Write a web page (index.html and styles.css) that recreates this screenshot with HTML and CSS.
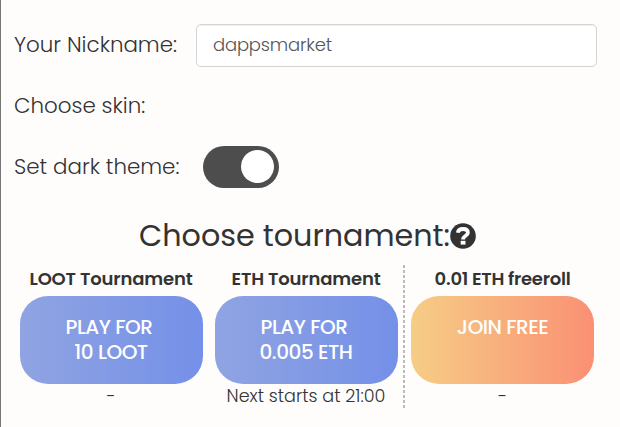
FILE: index.html
```html
<!DOCTYPE html>
<html lang="en">
<head>
    <meta charset="UTF-8">
    <meta name="viewport" content="width=device-width, initial-scale=1.0">
    <title>Choose tournament</title>
    <link rel="stylesheet" href="styles.css">
</head>
<body>
    <div class="panel">
        <div class="form-row">
            <label class="form-label label-nickname" for="nickname">Your Nickname:</label>
            <input class="nickname-input" id="nickname" type="text" value="dappsmarket">
        </div>
        <div class="form-row">
            <span class="form-label">Choose skin:</span>
        </div>
        <div class="form-row">
            <span class="form-label label-theme">Set dark theme:</span>
            <label class="switch">
                <input type="checkbox" checked>
                <span class="slider"></span>
            </label>
        </div>

        <h2 class="title">
            <span>Choose tournament:</span>
            <svg class="help-icon" viewBox="0 0 26 26">
                <circle cx="13" cy="13" r="12.8" fill="#333"/>
                <path d="M7.8 9.8C8.3 6.9 10.2 6 13.1 6C16 6 17.9 7.4 17.9 9.8C17.9 13 13.1 12.6 13.1 16.4" fill="none" stroke="#fff" stroke-width="3.8"/>
                <rect x="10.7" y="17.8" width="4.8" height="3.8" fill="#fff"/>
            </svg>
        </h2>

        <div class="tournaments">
            <div class="tournament">
                <div class="name">LOOT Tournament</div>
                <button class="play-btn">PLAY FOR<br><span class="price">10 LOOT</span></button>
                <div class="next">-</div>
            </div>
            <div class="tournament">
                <div class="name">ETH Tournament</div>
                <button class="play-btn">PLAY FOR<br><span class="price">0.005 ETH</span></button>
                <div class="next">Next starts at 21:00</div>
            </div>
            <div class="tournament freeroll">
                <div class="name name-free">0.01 ETH freeroll</div>
                <button class="play-btn join-btn">JOIN FREE</button>
                <div class="next">-</div>
            </div>
        </div>
    </div>
</body>
</html>
```

FILE: styles.css
```css
* {
    box-sizing: border-box;
}
body {
    margin: 0;
    background: #fefdfc;
    color: #333;
    font-family: Poppins, Inter, "Liberation Sans", sans-serif;
}
.panel {
    height: 427px;
    padding: 14px 23px 0 13px;
    border-left: 1px solid #777;
    overflow: hidden;
}
.form-row {
    display: flex;
    align-items: center;
    height: 61px;
}
.form-label {
    font-size: 21.4px;
    font-weight: 300;
    white-space: nowrap;
}
.label-nickname {
    width: 182px;
}
.label-theme {
    width: 189px;
}
.nickname-input {
    width: 401px;
    height: 43px;
    margin-top: 1px;
    padding: 0 16px 2px;
    border: 1px solid #d4d4d4;
    border-radius: 5px;
    background: #fff;
    box-shadow: inset 0 1px 1px rgba(0,0,0,0.06);
    color: #555;
    font-family: inherit;
    font-size: 18px;
    font-weight: 300;
    letter-spacing: -0.2px;
}
.switch {
    width: 76px;
    height: 42px;
}
.switch input {
    display: none;
}
.slider {
    display: flex;
    align-items: center;
    justify-content: flex-end;
    height: 100%;
    padding-right: 5px;
    border-radius: 21px;
    background: #4d4d4d;
}
.slider::before {
    content: "";
    width: 33px;
    height: 33px;
    border-radius: 50%;
    background: #fff;
}
.title {
    display: flex;
    align-items: center;
    height: 48px;
    margin: 15px 0 0 125px;
    font-size: 30.2px;
    font-weight: 400;
    white-space: nowrap;
}
.help-icon {
    width: 26px;
    height: 26px;
}
.tournaments {
    display: flex;
    margin-top: 5px;
}
.tournament {
    width: 195px;
    height: 145px;
    padding: 0 7px 0 6px;
    text-align: center;
    white-space: nowrap;
}
.freeroll {
    width: 198px;
    margin-left: -1px;
    padding-left: 8px;
    background: repeating-linear-gradient(#bbb 0 3px, transparent 3px 5px) 0 0 / 2px 100% no-repeat;
}
.name {
    height: 31px;
    font-size: 18px;
    font-weight: 600;
    line-height: 28px;
    letter-spacing: -0.15px;
}
.name-free {
    letter-spacing: -0.27px;
}
.play-btn {
    display: block;
    width: 183px;
    height: 88px;
    padding: 19px 5px 19px 0;
    border: none;
    border-radius: 28px;
    background: linear-gradient(90deg, #90a4e2, #7490e8);
    color: #fff;
    font-family: inherit;
    font-size: 20px;
    font-weight: 500;
    line-height: 25px;
    letter-spacing: -0.45px;
}
.price {
    padding-left: 4px;
}
.join-btn {
    padding: 19px 0 44px;
    letter-spacing: -0.5px;
}
.join-btn {
    background: linear-gradient(90deg, #f6cd85, #fa9074);
}
.next {
    font-size: 17.6px;
    font-weight: 300;
    line-height: 24px;
}
```
